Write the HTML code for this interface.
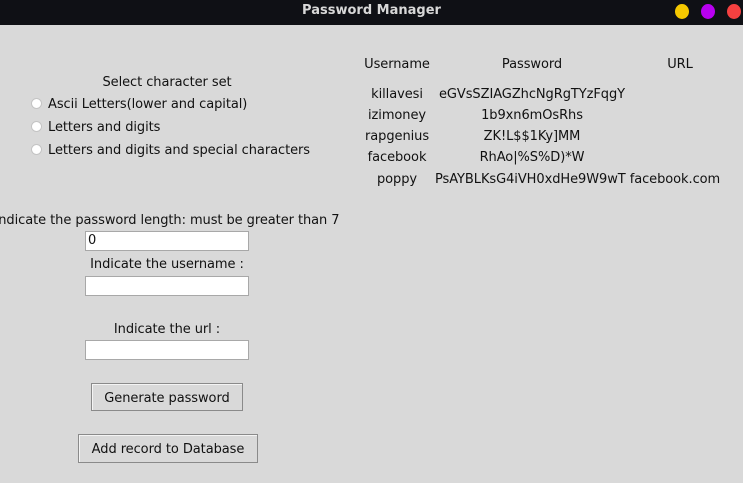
<!DOCTYPE html>
<html><head><meta charset="utf-8"><style>
html,body{margin:0;padding:0;}
body{width:743px;height:483px;background:#d9d9d9;position:relative;overflow:hidden;font-family:"DejaVu Sans","Liberation Sans",sans-serif;font-size:13px;color:#111;letter-spacing:-0.07px;}
.t{position:absolute;white-space:nowrap;line-height:16px;margin-top:1px;}
.c{transform:translateX(-50%);}
#bar{position:absolute;left:0;top:0;width:743px;height:25px;background:#0f1015;}
#title{position:absolute;top:3px;left:0;width:743px;text-align:center;color:#d8d8d8;font-weight:bold;font-size:13px;letter-spacing:0;}
.dot{position:absolute;top:4px;width:14px;height:15px;border-radius:50%;}
.in{position:absolute;background:#fff;border:1px solid #a8a8a8;box-sizing:border-box;height:20px;width:164px;left:85px;}
.btn{position:absolute;border:1px solid #8a8a8a;box-shadow:inset 1px 1px 0 #f4f4f4;box-sizing:border-box;text-align:center;line-height:29px;}
.rad{position:absolute;width:11px;height:11px;border-radius:50%;background:#fff;border:1px solid #c4c4c4;box-sizing:border-box;left:31px;}
</style></head><body>
<div id="bar"><div id="title">Password Manager</div>
<div class="dot" style="left:675px;background:#f5c800"></div>
<div class="dot" style="left:701px;background:#b800f0"></div>
<div class="dot" style="left:727px;background:#f54040"></div></div>

<div class="t c" style="left:167px;top:74px">Select character set</div>
<div class="rad" style="top:98px"></div><div class="t" style="left:48px;top:96px">Ascii Letters(lower and capital)</div>
<div class="rad" style="top:121px"></div><div class="t" style="left:48px;top:119px">Letters and digits</div>
<div class="rad" style="top:144px"></div><div class="t" style="left:48px;top:142px">Letters and digits and special characters</div>

<div class="t c" style="left:397px;top:56px">Username</div>
<div class="t c" style="left:532px;top:56px">Password</div>
<div class="t c" style="left:680px;top:56px">URL</div>
<div class="t c" style="left:397px;top:86px">killavesi</div>
<div class="t c" style="left:532px;top:86px">eGVsSZIAGZhcNgRgTYzFqgY</div>
<div class="t c" style="left:397px;top:107px">izimoney</div>
<div class="t c" style="left:532px;top:107px">1b9xn6mOsRhs</div>
<div class="t c" style="left:397px;top:128px">rapgenius</div>
<div class="t c" style="left:532px;top:128px">ZK!L$$1Ky]MM</div>
<div class="t c" style="left:397px;top:149px">facebook</div>
<div class="t c" style="left:532px;top:149px">RhAo|%S%D)*W</div>
<div class="t c" style="left:397px;top:171px">poppy</div>
<div class="t" style="left:435px;top:171px">PsAYBLKsG4iVH0xdHe9W9wT facebook.com</div>

<div class="t c" style="left:167px;top:212px">Indicate the password length: must be greater than 7</div>
<div class="in" style="top:231px"><span class="t" style="left:2px;top:0px">0</span></div>
<div class="t c" style="left:167px;top:256px">Indicate the username :</div>
<div class="in" style="top:276px"></div>
<div class="t c" style="left:167px;top:321px">Indicate the url :</div>
<div class="in" style="top:340px"></div>
<div class="btn" style="left:91px;top:383px;width:152px;height:28px">Generate password</div>
<div class="btn" style="left:78px;top:434px;width:180px;height:29px">Add record to Database</div>
</body></html>
